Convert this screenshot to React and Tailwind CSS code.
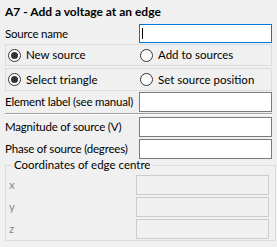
export default function App() {
  const Radio = ({ checked, label }) => (
    <div className="flex items-center whitespace-nowrap">
      <span className="w-[13px] h-[13px] rounded-full border border-[#333333] bg-white flex items-center justify-center shrink-0">
        {checked && <span className="w-[7px] h-[7px] rounded-full bg-[#333333]" />}
      </span>
      <span className="ml-[5px]">{label}</span>
    </div>
  );

  const Row = ({ label, inputClass, children }) => (
    <div className="flex items-center justify-between">
      <span className="whitespace-nowrap tracking-[-0.2px]">{label}</span>
      <div className={"shrink-0 " + inputClass}>{children}</div>
    </div>
  );

  const Disabled = ({ label }) => (
    <div className="flex items-center justify-between h-[20px]">
      <span className="ml-[2px] text-[#8a8a8a]">{label}</span>
      <div className="shrink-0 w-[133px] h-[20px] border border-[#cccccc] bg-[#f0f0f0]" />
    </div>
  );

  return (
    <div
      className="w-[277px] h-[247px] bg-[#f0f0f0] text-black text-[11.5px] leading-[16px] px-[5px] flex flex-col"
      style={{ fontFamily: 'Lato, "Liberation Sans", sans-serif' }}
    >
      <div className="h-[24px] flex items-center font-bold text-[12px] whitespace-nowrap">A7 - Add a voltage at an edge</div>
      <Row label="Source name" inputClass="w-[133px] h-[19px] border border-[#0078d7] bg-white flex items-center">
        <span className="ml-[2px] w-px h-[11px] bg-black" />
      </Row>
      <div className="mt-[1px] h-[22px] border border-[#dcdcdc] flex items-center pl-[2px]">
        <div className="w-[132px] shrink-0"><Radio checked label="New source" /></div>
        <Radio label="Add to sources" />
      </div>
      <div className="mt-[2px] h-[23px] border border-[#dcdcdc] flex items-center pl-[2px]">
        <div className="w-[132px] shrink-0"><Radio checked label="Select triangle" /></div>
        <Radio label="Set source position" />
      </div>
      <div className="mt-[1px]">
        <Row label="Element label (see manual)" inputClass="w-[133px] h-[20px] border border-[#7a7a7a] bg-white" />
      </div>
      <div className="mt-[1px] h-[2px] border-t border-[#a0a0a0] border-b border-b-white" />
      <div className="mt-[2px]">
        <Row label="Magnitude of source (V)" inputClass="w-[133px] h-[20px] border border-[#7a7a7a] bg-white" />
      </div>
      <div className="mt-[2px]">
        <Row label="Phase of source (degrees)" inputClass="w-[133px] h-[20px] border border-[#7a7a7a] bg-white" />
      </div>
      <fieldset className="w-[271px] border border-[#dcdcdc] pl-[1px] pr-[6px] pb-[1px] pt-[4px] flex flex-col gap-[2px]">
        <legend className="ml-[5px] px-[2px] leading-[12px] whitespace-nowrap">Coordinates of edge centre</legend>
        <Disabled label="x" />
        <Disabled label="y" />
        <Disabled label="z" />
      </fieldset>
    </div>
  );
}
